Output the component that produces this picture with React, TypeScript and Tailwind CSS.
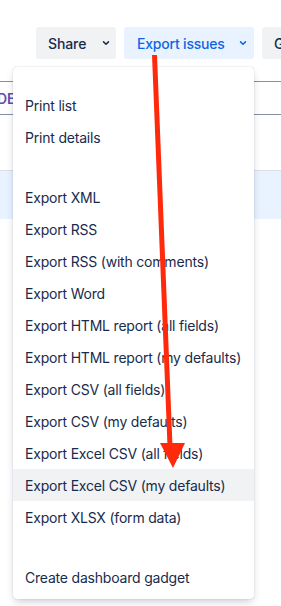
import React from "react";

const font = { fontFamily: "Inter, 'Noto Sans', 'Liberation Sans', sans-serif" };

function Chevron({ color }: { color: string }) {
  return (
    <svg width="16" height="16" viewBox="0 0 24 24" fill="none">
      <path d="M8.3 10.3l3.7 3.6 3.7-3.6" stroke={color} strokeWidth="2.2" strokeLinecap="round" strokeLinejoin="round" />
    </svg>
  );
}

const section1 = ["Print list", "Print details"];
const section2 = [
  "Export XML",
  "Export RSS",
  "Export RSS (with comments)",
  "Export Word",
  "Export HTML report (all fields)",
  "Export HTML report (my defaults)",
  "Export CSV (all fields)",
  "Export CSV (my defaults)",
  "Export Excel CSV (all fields)",
  "Export Excel CSV (my defaults)",
  "Export XLSX (form data)",
];
const section3 = ["Create dashboard gadget"];

function Item({ label, active }: { label: string; active?: boolean }) {
  return (
    <div
      className={`h-[32px] flex items-center pl-[12px] text-[14px] tracking-[-0.2px] text-[#172b4d] whitespace-nowrap ${active ? "bg-[#f1f2f4]" : ""}`}
    >
      {label}
    </div>
  );
}

export default function App() {
  return (
    <div className="relative w-[281px] h-[606px] overflow-hidden bg-white" style={font}>
      {/* toolbar */}
      <div className="flex gap-[8px] pl-[36px] pt-[27px] whitespace-nowrap">
        <div className="h-[32px] w-[80px] shrink-0 rounded-[3px] bg-[#f1f2f4] flex items-center pl-[12px] gap-[12px] text-[14px] tracking-[-0.1px] font-medium text-[#172b4d]">
          <span>Share</span>
          <Chevron color="#172b4d" />
        </div>
        <div className="h-[32px] w-[130px] shrink-0 rounded-[3px] bg-[#e9f2ff] flex items-center pl-[13px] gap-[10px] text-[14px] tracking-[-0.2px] font-medium text-[#0c66e4]">
          <span>Export issues</span>
          <Chevron color="#0c66e4" />
        </div>
        <div className="h-[32px] w-[80px] shrink-0 rounded-[3px] bg-[#f1f2f4] flex items-center pl-[12px] text-[14px] font-medium text-[#172b4d]">
          <span>Go</span>
        </div>
      </div>

      {/* table behind */}
      <div className="mt-[22px] h-[1px] bg-[#8590a2]" />
      <div className="h-[32px] flex items-center">
        <span className="ml-[-3px] text-[14px] font-semibold text-[#5e4db2]">DE</span>
      </div>
      <div className="h-[1px] bg-[#8590a2]" />
      <div className="h-[55px]" />
      <div className="h-[1px] bg-[#dcdfe4]" />
      <div className="h-[48px] bg-[#e9f2ff]" />

      {/* dropdown menu */}
      <div className="absolute left-[13px] top-[67px] w-[241px] h-[532px] bg-white rounded-[4px] shadow-[0_4px_8px_-2px_rgba(9,30,66,0.25),0_0_1px_rgba(9,30,66,0.31)] pt-[22px]">
        {section1.map((l) => (
          <Item key={l} label={l} />
        ))}
        <div className="h-[28px]" />
        {section2.map((l) => (
          <Item key={l} label={l} active={l === "Export Excel CSV (my defaults)"} />
        ))}
        <div className="h-[28px]" />
        {section3.map((l) => (
          <Item key={l} label={l} />
        ))}
      </div>

      {/* red annotation arrow */}
      <svg className="absolute left-0 top-0 pointer-events-none" width="281" height="606" viewBox="0 0 281 606">
        <line x1="154.5" y1="55" x2="170" y2="446" stroke="#ff2a0b" strokeWidth="5" />
        <polygon points="160,443 185,443 173,468" fill="#ff2a0b" />
      </svg>
    </div>
  );
}
